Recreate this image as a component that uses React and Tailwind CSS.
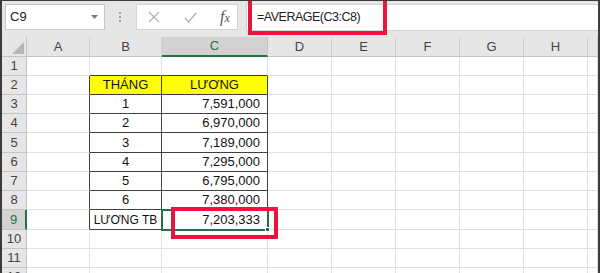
import React from "react";

const cols = [
  { key: "A", w: "w-[63px]" },
  { key: "B", w: "w-[72px]" },
  { key: "C", w: "w-[106px]" },
  { key: "D", w: "w-[64px]" },
  { key: "E", w: "w-[64px]" },
  { key: "F", w: "w-[64px]" },
  { key: "G", w: "w-[64px]" },
  { key: "H", w: "w-[64px]" },
  { key: "I", w: "flex-1" },
];

const rows = [
  { n: 1, h: "h-[19px]" },
  { n: 2, h: "h-[19px]", b: "THÁNG", c: "LƯƠNG" },
  { n: 3, h: "h-[19px]", b: "1", c: "7,591,000" },
  { n: 4, h: "h-[19px]", b: "2", c: "6,970,000" },
  { n: 5, h: "h-[20px]", b: "3", c: "7,189,000" },
  { n: 6, h: "h-[19px]", b: "4", c: "7,295,000" },
  { n: 7, h: "h-[19px]", b: "5", c: "6,795,000" },
  { n: 8, h: "h-[19px]", b: "6", c: "7,380,000" },
  { n: 9, h: "h-[20px]", b: "LƯƠNG TB", c: "7,203,333" },
  { n: 10, h: "h-[19px]" },
  { n: 11, h: "h-[19px]" },
  { n: 12, h: "h-[19px]" },
];

function clsxLite(...a) {
  return a.filter(Boolean).join(" ");
}

const Cell = ({ r, ci, w }) => {
  const inTable = r.n >= 2 && r.n <= 9 && (ci === 1 || ci === 2);
  const rightDark = inTable || (ci === 0 && r.n >= 2 && r.n <= 9);
  const bottomDark = inTable || (r.n === 1 && (ci === 1 || ci === 2));
  const selected = r.n === 9 && ci === 2;
  const yellow = r.n === 2 && inTable;

  let text = null;
  let align = "justify-center";
  if (ci === 1 && r.b) text = r.b;
  if (ci === 2 && r.c) {
    text = r.c;
    align = r.n === 2 ? "justify-center" : "justify-end pr-[7px]";
  }

  return (
    <div
      className={clsxLite(
        "shrink-0 flex items-center border-r border-b text-[#111] whitespace-nowrap",
        w,
        align,
        r.n === 9 && ci === 1 ? "text-[12px]" : "text-[13px]",
        rightDark ? "border-r-[#404040]" : "border-r-[#e1e1e1]",
        bottomDark ? "border-b-[#404040]" : "border-b-[#e1e1e1]",
        yellow ? "bg-[#ffff00]" : "bg-white",
        selected && "relative z-10 outline-2 outline-[#217346] -outline-offset-1"
      )}
    >
      {text}
      {selected && (
        <span className="absolute -right-[3px] -bottom-[3px] w-[5px] h-[5px] bg-[#217346] border border-white" />
      )}
    </div>
  );
};

export default function App() {
  return (
    <div className="relative w-[600px] h-[273px] overflow-hidden bg-white border-t border-l-2 border-r-2 border-[#3c3c3c] font-['Liberation_Sans',Arial,sans-serif]">
      {/* formula bar */}
      <div className="h-[36px] bg-[#e6e6e6] flex items-start pt-[3px] pl-[3px]">
        <div className="w-[100px] h-[26px] bg-white border border-[#c6c6c6] flex items-center justify-between pl-[4px] pr-[6px]">
          <span className="text-[13px] text-[#222]">C9</span>
          <svg width="7" height="4" viewBox="0 0 7 4">
            <path d="M0 0h7L3.5 4z" fill="#7a7a7a" />
          </svg>
        </div>
        <div className="ml-[13px] w-[3px] h-[26px] flex flex-col items-center justify-center gap-[2px]">
          <span className="w-[2px] h-[2px] bg-[#a0a0a0]" />
          <span className="w-[2px] h-[2px] bg-[#a0a0a0]" />
          <span className="w-[2px] h-[2px] bg-[#a0a0a0]" />
        </div>
        <div className="ml-[15px] w-[102px] h-[26px] bg-white border border-[#d4d4d4] flex items-center">
          <svg className="ml-[11px]" width="12" height="12" viewBox="0 0 12 12">
            <path d="M1 1l10 10M11 1L1 11" stroke="#b0b0b0" strokeWidth="1.2" fill="none" />
          </svg>
          <svg className="ml-[24px]" width="13" height="11" viewBox="0 0 13 11">
            <path d="M1 6l3.5 4L12 1" stroke="#b0b0b0" strokeWidth="1.3" fill="none" />
          </svg>
          <span className="ml-[23px] font-['Liberation_Serif',serif] italic text-[16px] text-[#555] leading-none">
            f<span className="text-[12px]">x</span>
          </span>
        </div>
        <div className="ml-[8px] flex-1 h-[27px] bg-white border-t border-b border-l border-[#d4d4d4] flex items-center pl-[10px]">
          <span className="text-[12.5px] tracking-[-0.5px] text-[#222]">=AVERAGE(C3:C8)</span>
        </div>
      </div>

      {/* column headers */}
      <div className="flex h-[20px] bg-[#e6e6e6] border-b border-[#c4c4c4]">
        <div className="w-[25px] shrink-0 border-r border-[#c4c4c4] flex items-end justify-end pr-[2px] pb-[2px]">
          <svg width="12" height="12" viewBox="0 0 12 12">
            <path d="M12 0v12H0z" fill="#b5b5b5" />
          </svg>
        </div>
        {cols.map((c) =>
          c.key === "C" ? (
            <div
              key={c.key}
              className={`${c.w} shrink-0 flex items-center justify-center bg-[#d2d2d2] border-r border-[#c4c4c4] border-b-2 border-b-[#217346] -mb-px text-[13px] text-[#217346]`}
            >
              {c.key}
            </div>
          ) : (
            <div
              key={c.key}
              className={`${c.w} shrink-0 flex items-center justify-center border-r border-[#d0d0d0] text-[13px] text-[#444]`}
            >
              {c.key === "I" ? "" : c.key}
            </div>
          )
        )}
      </div>

      {/* rows */}
      {rows.map((r) => (
        <div key={r.n} className={`flex ${r.h}`}>
          {r.n === 9 ? (
            <div className="w-[25px] shrink-0 flex items-center justify-center bg-[#d2d2d2] border-r-2 border-[#217346] border-b border-b-[#c4c4c4] text-[13px] text-[#217346]">
              {r.n}
            </div>
          ) : (
            <div className="w-[25px] shrink-0 flex items-center justify-center bg-[#e6e6e6] border-r border-b border-[#c4c4c4] text-[13px] text-[#444]">
              {r.n}
            </div>
          )}
          {cols.map((c, ci) => (
            <Cell key={c.key} r={r} ci={ci} w={c.w} />
          ))}
        </div>
      ))}

      {/* red highlight boxes */}
      <div className="absolute left-[246px] -top-[5px] w-[139px] h-[39px] border-4 border-[#e8163c]" />
      <div className="absolute left-[169px] top-[206px] w-[107px] h-[32px] border-4 border-[#e8163c] z-20" />
    </div>
  );
}
